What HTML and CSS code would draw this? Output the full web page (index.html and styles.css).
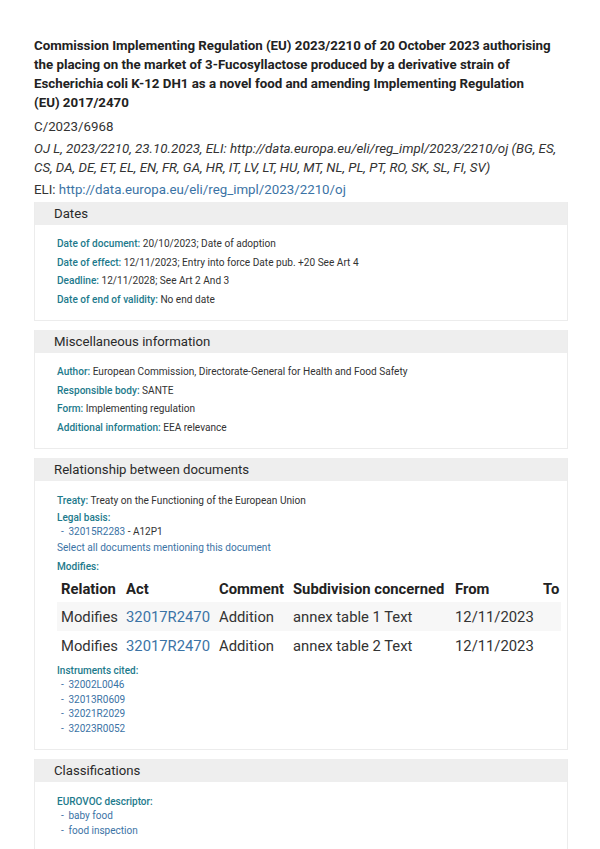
FILE: index.html
```html
<!DOCTYPE html>
<html lang="en">
<head>
    <meta charset="UTF-8">
    <meta name="viewport" content="width=device-width, initial-scale=1.0">
    <title>Regulation (EU) 2023/2210</title>
    <link rel="stylesheet" href="styles.css">
</head>
<body>
    <div class="page">
        <h1 class="doc-title">Commission Implementing Regulation (EU) 2023/2210 of 20 October 2023 authorising the placing on the market of 3-Fucosyllactose produced by a derivative strain of Escherichia coli K-12 DH1 as a novel food and amending Implementing Regulation (EU)&nbsp;2017/2470</h1>
        <p class="doc-line">C/2023/6968</p>
        <p class="doc-line oj">OJ L, 2023/2210, 23.10.2023, ELI: http://data.europa.eu/eli/reg_impl/2023/2210/oj (BG, ES, CS, DA, DE, ET, EL, EN, FR, GA, HR, IT, LV, LT, HU, MT, NL, PL, PT, RO, SK, SL, FI, SV)</p>
        <p class="doc-line eli">ELI: <a href="#">http://data.europa.eu/eli/reg_impl/2023/2210/oj</a></p>

        <div class="panel">
            <div class="panel-head">Dates</div>
            <div class="panel-body">
                <p class="row"><span class="label">Date of document:</span> 20/10/2023; Date of adoption</p>
                <p class="row"><span class="label">Date of effect:</span> 12/11/2023; Entry into force Date pub. +20 See Art 4</p>
                <p class="row"><span class="label">Deadline:</span> 12/11/2028; See Art 2 And 3</p>
                <p class="row"><span class="label">Date of end of validity:</span> No end date</p>
            </div>
        </div>

        <div class="panel">
            <div class="panel-head">Miscellaneous information</div>
            <div class="panel-body">
                <p class="row"><span class="label">Author:</span> European Commission, Directorate-General for Health and Food Safety</p>
                <p class="row"><span class="label">Responsible body:</span> SANTE</p>
                <p class="row"><span class="label">Form:</span> Implementing regulation</p>
                <p class="row"><span class="label">Additional information:</span> EEA relevance</p>
            </div>
        </div>

        <div class="panel">
            <div class="panel-head">Relationship between documents</div>
            <div class="panel-body rel-body">
                <p class="row"><span class="label">Treaty:</span> Treaty on the Functioning of the European Union</p>
                <p class="list-label">Legal basis:</p>
                <ul class="doc-list">
                    <li><a href="#">32015R2283</a> - A12P1</li>
                </ul>
                <p class="row"><a href="#">Select all documents mentioning this document</a></p>
                <p class="row"><span class="label">Modifies:</span></p>
                <table class="rel-table">
                    <colgroup>
                        <col class="c-rel">
                        <col class="c-act">
                        <col class="c-com">
                        <col class="c-sub">
                        <col class="c-from">
                        <col class="c-to">
                    </colgroup>
                    <thead>
                        <tr>
                            <th>Relation</th>
                            <th>Act</th>
                            <th>Comment</th>
                            <th>Subdivision concerned</th>
                            <th>From</th>
                            <th>To</th>
                        </tr>
                    </thead>
                    <tbody>
                        <tr>
                            <td>Modifies</td>
                            <td><a href="#">32017R2470</a></td>
                            <td>Addition</td>
                            <td>annex table 1 Text</td>
                            <td>12/11/2023</td>
                            <td></td>
                        </tr>
                        <tr>
                            <td>Modifies</td>
                            <td><a href="#">32017R2470</a></td>
                            <td>Addition</td>
                            <td>annex table 2 Text</td>
                            <td>12/11/2023</td>
                            <td></td>
                        </tr>
                    </tbody>
                </table>
                <p class="list-label cited">Instruments cited:</p>
                <ul class="doc-list">
                    <li><a href="#">32002L0046</a></li>
                    <li><a href="#">32013R0609</a></li>
                    <li><a href="#">32021R2029</a></li>
                    <li><a href="#">32023R0052</a></li>
                </ul>
            </div>
        </div>

        <div class="panel">
            <div class="panel-head">Classifications</div>
            <div class="panel-body">
                <p class="list-label eurovoc">EUROVOC descriptor:</p>
                <ul class="doc-list wide">
                    <li><a href="#">baby food</a></li>
                    <li><a href="#">food inspection</a></li>
                </ul>
            </div>
        </div>
    </div>
</body>
</html>
```

FILE: styles.css
```css
body {
    font-family: Roboto, "Liberation Sans", sans-serif;
    background-color: #ffffff;
    color: #333333;
    margin: 0;
    padding: 0;
}

a {
    color: #3b73a5;
    text-decoration: none;
}

.page {
    width: 534px;
    padding: 36px 0 0 34px;
}

.doc-title {
    width: 521px;
    font-size: 13.3px;
    font-weight: bold;
    line-height: 19px;
    margin: 0;
    color: #222222;
}

.doc-line {
    font-size: 13.3px;
    line-height: 19px;
    margin: 3.5px 0 0 0;
}

.doc-line:first-of-type {
    margin-top: 4.5px;
}

.oj {
    font-style: italic;
}

.eli {
    margin-top: 3px;
    margin-bottom: 3px;
}

.panel {
    border: 1px solid #ececec;
    border-top: none;
    margin-bottom: 9px;
}

.panel-head {
    background-color: #eeeeee;
    font-size: 13.2px;
    line-height: 23px;
    height: 23px;
    padding-left: 19px;
    color: #2a2a2a;
}

.panel-body {
    padding: 10px 6px 11px 22px;
}

.rel-body {
    padding-top: 11px;
    padding-bottom: 13px;
}

.row {
    font-size: 10.1px;
    line-height: 18.5px;
    margin: 0;
}

.label,
.list-label {
    color: #1d7a8c;
    font-weight: 500;
}

.list-label {
    font-size: 10px;
    line-height: 14px;
    margin: 0;
}

.list-label.cited {
    margin-top: 4px;
}

.list-label.eurovoc {
    line-height: 12px;
    margin-top: 3.5px;
}

.doc-list {
    list-style: none;
    margin: 0;
    padding: 0 0 0 4px;
    font-size: 10px;
    line-height: 14.5px;
}

.doc-list li::before {
    content: "-";
    color: #3b73a5;
    display: inline-block;
    width: 7.5px;
}

.doc-list.wide {
    line-height: 15px;
}

.rel-table {
    width: 504px;
    table-layout: fixed;
    border-collapse: collapse;
    font-size: 14.8px;
}

.c-rel { width: 65px; }
.c-act { width: 93px; }
.c-com { width: 74px; }
.c-sub { width: 162px; }
.c-from { width: 88px; }
.c-to { width: 22px; }

.rel-table th,
.rel-table td {
    text-align: left;
    padding: 0 0 0 4px;
    white-space: nowrap;
}

.rel-table th {
    height: 26px;
    font-weight: bold;
    color: #222222;
}

.rel-table td {
    height: 29px;
}

.rel-table tbody tr:first-child {
    background-color: #f7f7f7;
}
```
